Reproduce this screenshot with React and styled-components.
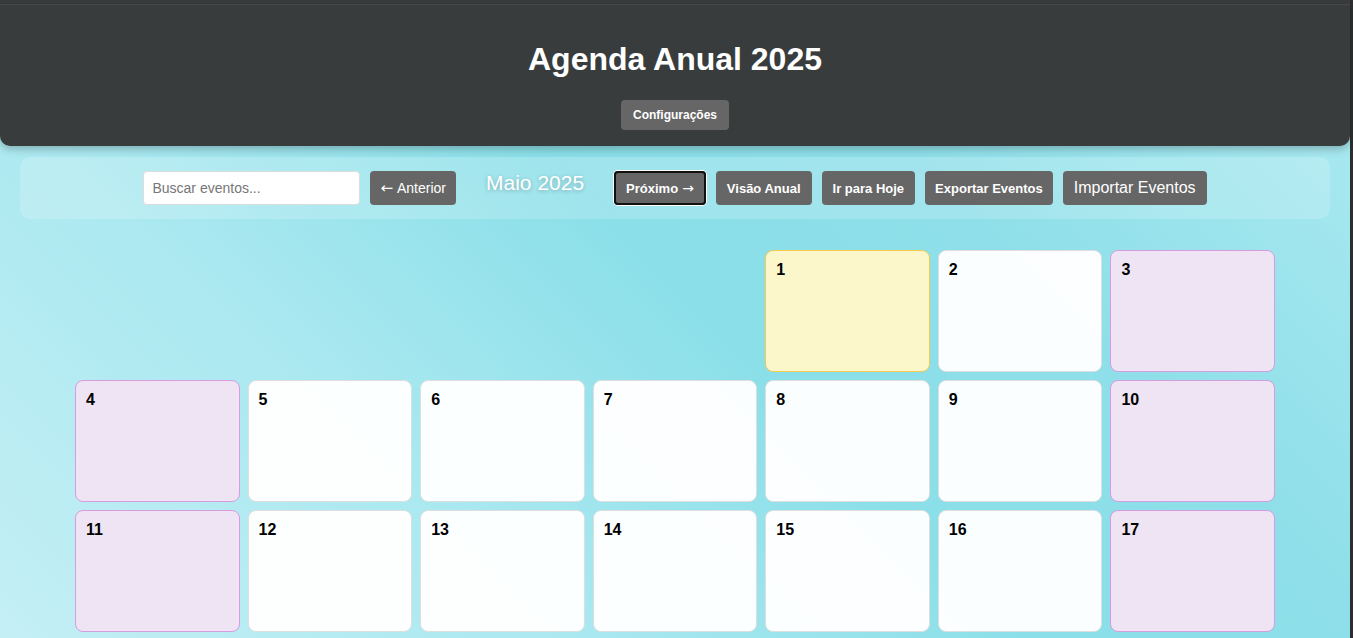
import React from "react";
import styled, { createGlobalStyle } from "styled-components";

const Global = createGlobalStyle`
  html { overflow: hidden; background: #2c2e30; }
  body {
    margin: 0;
    font-family: "Liberation Sans", Arial, sans-serif;
    background: #2c2e30;
  }
  * { box-sizing: border-box; }
`;

const Page = styled.div`
  min-height: 100vh;
  margin-right: 3px;
  background: linear-gradient(
    45deg,
    #c4eff5 0%,
    #a9e8f0 30%,
    #8adfe8 52%,
    #8edfe9 70%,
    #aae9f0 95%
  );
  background-attachment: fixed;
  display: flex;
  flex-direction: column;
`;

const TopStrip = styled.div`
  height: 5px;
  background: #3a3b3c;
  border-bottom: 1px solid #4a4b4c;
`;

const Header = styled.header`
  background: #383c3d;
  border-radius: 0 0 10px 10px;
  padding: 36px 20px 16px;
  display: flex;
  flex-direction: column;
  align-items: center;
  box-shadow: 0 3px 8px rgba(0, 0, 0, 0.25);
`;

const Title = styled.h1`
  margin: 0 0 22px;
  font-size: 32px;
  line-height: 37px;
  font-weight: bold;
  color: #fff;
`;

const Button = styled.button`
  height: ${(p) => p.$h || 34}px;
  padding: 0 ${(p) => p.$pad || 11}px;
  border: none;
  border-radius: 4px;
  background: #666;
  color: #fff;
  font-family: "Liberation Sans", Arial, sans-serif;
  font-size: ${(p) => p.$size || 13}px;
  font-weight: ${(p) => (p.$bold === false ? "normal" : "bold")};
  white-space: nowrap;
  cursor: pointer;
  display: inline-flex;
  align-items: center;
  gap: 4px;
  box-shadow: ${(p) =>
    p.$focused ? "inset 0 0 0 2px #111, 0 0 0 1px #fff" : "none"};
`;

const Arrow = styled.span`
  font-family: "DejaVu Sans", sans-serif;
  font-weight: normal;
  font-size: ${(p) => p.$size || 14}px;
  line-height: 1;
`;

const Toolbar = styled.div`
  margin: 11px 20px 0;
  padding: 14px 20px;
  border-radius: 10px;
  background: rgba(255, 255, 255, 0.18);
  display: flex;
  justify-content: center;
  align-items: center;
  gap: 10px;
`;

const Search = styled.input`
  width: 217px;
  height: 34px;
  padding: 0 8px;
  border: 1px solid #ddd;
  border-radius: 4px;
  background: #fff;
  font-family: "Liberation Sans", Arial, sans-serif;
  font-size: 14px;
  &::placeholder { color: #767676; }
`;

const MonthLabel = styled.span`
  margin: 0 20px;
  padding-bottom: 10px;
  font-size: 21px;
  color: #fff;
  text-shadow: 0 1px 4px rgba(0, 0, 0, 0.25);
`;

const Grid = styled.div`
  width: 1200px;
  margin: 31px auto 0;
  display: grid;
  grid-template-columns: repeat(7, 1fr);
  grid-auto-rows: 122px;
  column-gap: 8px;
  row-gap: 8px;
`;

const variants = {
  normal: { bg: "rgba(255,255,255,0.97)", border: "#dedede" },
  weekend: { bg: "#efe4f3", border: "#d89be0" },
  today: { bg: "#fbf7cb", border: "#f3c94f" },
};

const Day = styled.div`
  border-radius: 8px;
  border: 1px solid ${(p) => variants[p.$kind].border};
  background: ${(p) => variants[p.$kind].bg};
  padding: 10px 10px;
  font-size: 16px;
  line-height: 18px;
  font-weight: bold;
  color: #000;
`;

const Empty = styled.div``;

export default function App() {
  const offset = 4;
  const lastVisible = 17;
  const cells = [];
  for (let i = 0; i < offset; i++) cells.push(<Empty key={"e" + i} />);
  for (let d = 1; d <= lastVisible; d++) {
    const col = (offset + d - 1) % 7;
    const kind = d === 1 ? "today" : col === 0 || col === 6 ? "weekend" : "normal";
    cells.push(
      <Day key={d} $kind={kind}>
        {d}
      </Day>
    );
  }
  return (
    <>
      <Global />
      <Page>
        <TopStrip />
        <Header>
          <Title>Agenda Anual 2025</Title>
          <Button $h={30} $size={12} $pad={12}>Configurações</Button>
        </Header>
        <Toolbar>
          <Search placeholder="Buscar eventos..." />
          <Button $size={14} $bold={false} $pad={10}>
            <Arrow $size={15}>←</Arrow>Anterior
          </Button>
          <MonthLabel>Maio 2025</MonthLabel>
          <Button $focused $pad={12}>
            Próximo<Arrow $size={14}>→</Arrow>
          </Button>
          <Button>Visão Anual</Button>
          <Button $pad={11}>Ir para Hoje</Button>
          <Button $pad={10}>Exportar Eventos</Button>
          <Button $size={16} $bold={false} $pad={11}>Importar Eventos</Button>
        </Toolbar>
        <Grid>{cells}</Grid>
      </Page>
    </>
  );
}
